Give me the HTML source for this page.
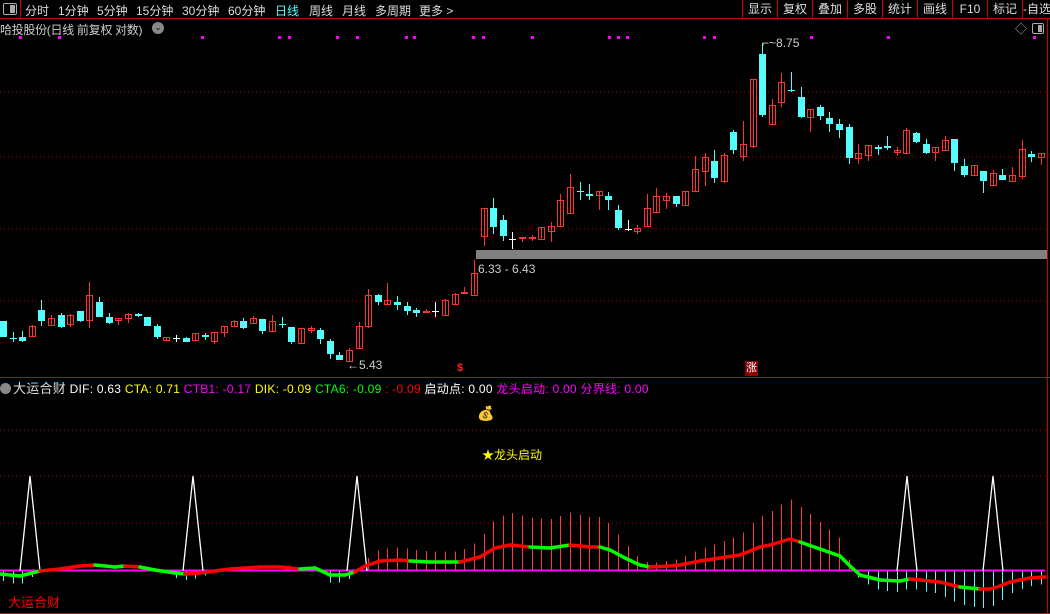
<!DOCTYPE html>
<html><head><meta charset="utf-8">
<style>
*{margin:0;padding:0;box-sizing:border-box}
body{width:1050px;height:614px;background:#000;overflow:hidden;position:relative;font-family:"Liberation Sans","Noto Sans CJK SC",sans-serif;font-size:12px;color:#ddd}
.t{position:absolute;white-space:nowrap}
#bar{position:absolute;left:0;top:0;width:1050px;height:19px;border-bottom:1px solid #c00}
.tab{position:absolute;top:2px;font-size:12px;color:#ddd}
.btn{position:absolute;top:0;height:19px;border-left:1px solid #c00;font-size:12px;color:#ddd;text-align:center;line-height:18px}
</style></head><body>
<div id="bar">
 <div style="position:absolute;left:3px;top:3px;width:14px;height:12px;border:1px solid #aaa;border-radius:2px"><div style="position:absolute;right:1px;top:1px;width:5px;height:8px;background:#aaa"></div></div>
 <div style="position:absolute;left:20px;top:0;width:1px;height:19px;background:#c00"></div>
 <span class="tab" style="left:25px">分时</span>
 <span class="tab" style="left:58px">1分钟</span>
 <span class="tab" style="left:97px">5分钟</span>
 <span class="tab" style="left:136px">15分钟</span>
 <span class="tab" style="left:182px">30分钟</span>
 <span class="tab" style="left:228px">60分钟</span>
 <span class="tab" style="left:275px;color:#5ff">日线</span>
 <span class="tab" style="left:309px">周线</span>
 <span class="tab" style="left:342px">月线</span>
 <span class="tab" style="left:375px">多周期</span>
 <span class="tab" style="left:419px">更多 &gt;</span>
 <div class="btn" style="left:742px;width:35px">显示</div>
 <div class="btn" style="left:777px;width:35px">复权</div>
 <div class="btn" style="left:812px;width:35px">叠加</div>
 <div class="btn" style="left:847px;width:35px">多股</div>
 <div class="btn" style="left:882px;width:35px">统计</div>
 <div class="btn" style="left:917px;width:35px">画线</div>
 <div class="btn" style="left:952px;width:35px">F10</div>
 <div class="btn" style="left:987px;width:35px">标记</div>
 <div class="btn" style="left:1022px;width:30px;text-align:left">-自选</div>
</div>
<div class="t" style="left:0;top:21px;font-size:12px;color:#ccc;letter-spacing:-0.3px">哈投股份(日线 前复权 对数)</div>
<div style="position:absolute;left:152px;top:22px;width:12px;height:12px;border-radius:6px;background:#888;color:#000;font-size:8px;text-align:center;line-height:12px">⌄</div>
<div class="t" style="left:1015px;top:20px;color:#aaa;font-size:12px">◇</div>
<div style="position:absolute;left:1032px;top:23px;width:12px;height:11px;border:1px solid #aaa;border-radius:2px"><div style="position:absolute;right:1px;top:1px;width:4px;height:7px;background:#aaa"></div></div>

<svg id="s" width="1050" height="614" style="position:absolute;left:0;top:0" xmlns="http://www.w3.org/2000/svg" shape-rendering="crispEdges"></svg>

<div class="t" style="left:478px;top:262px;color:#ccc;font-size:12px">6.33 - 6.43</div>
<div class="t" style="left:347px;top:358px;color:#ccc;font-size:12px">←5.43</div>
<div class="t" style="left:762px;top:36px;color:#ccc;font-size:12px">⌐~8.75</div>
<div class="t" style="left:457px;top:362px;color:#f22;font-size:11px;font-weight:bold">$</div>
<div class="t" style="left:745px;top:361px;width:13px;height:15px;background:#8b0000;color:#fff;font-size:11px;line-height:15px;text-align:center">涨</div>

<div class="t" style="left:0;top:378px;font-size:12px;letter-spacing:0.25px">
<span style="display:inline-block;width:11px;height:11px;border-radius:6px;background:#888;vertical-align:-1px;margin-right:2px"></span><span style="color:#ddd;font-size:13px">大运合财</span>
<span style="color:#fff">DIF: 0.63</span> <span style="color:#ff0">CTA: 0.71</span> <span style="color:#f0f">CTB1: -0.17</span> <span style="color:#ff0">DIK: -0.09</span> <span style="color:#0f0">CTA6: -0.09</span> <span style="color:#f00">: -0.09</span> <span style="color:#fff">启动点: 0.00</span> <span style="color:#f0f">龙头启动: 0.00</span> <span style="color:#f0f">分界线: 0.00</span>
</div>
<div class="t" style="left:477px;top:405px;font-size:14px">💰</div>
<div class="t" style="left:482px;top:446px;color:#ff0;font-size:12px">★龙头启动</div>
<div class="t" style="left:8px;top:592px;color:#f00;font-size:13px">大运合财</div>

<script>
var s=document.getElementById('s'),h='';
function L(x1,y1,x2,y2,c,w,d){h+='<line x1="'+x1+'" y1="'+y1+'" x2="'+x2+'" y2="'+y2+'" stroke="'+c+'" stroke-width="'+(w||1)+'"'+(d?' stroke-dasharray="'+d+'"':'')+'/>';}
function R(x,y,w,hh,f,st){h+='<rect x="'+x+'" y="'+y+'" width="'+w+'" height="'+hh+'" fill="'+f+'"'+(st?' stroke="'+st+'"':'')+'/>';}
[92,157,229,301].forEach(function(y){L(0,y,1047,y,'#a00',1,'1 3');});
[430,476,523].forEach(function(y){L(0,y,1047,y,'#a00',1,'1 3');});
L(0,377.5,1050,377.5,'#c00',1);L(1047.5,19,1047.5,614,'#c00',1);L(0,613.5,1050,613.5,'#c00',1);
[19,58,201,278,288,336,356,405,413,472,482,531,608,617,626,703,713,810,887,1033].forEach(function(x){R(x,36,3,3,'#f0f');});
R(476,250,571,9,'#808080');
var C=[['c',321,337,321,337],['c',338,339,332,342],['c',337,341,331,342],['r',326,337,325,337],['c',310,321,300,326],['r',318,326,315,326],['c',315,327,313,328],['r',315,325,314,327],['c',311,321,311,322],['r',295,321,282,328],['c',302,317,297,317],['c',317,323,313,324],['r',318,321,318,325],['r',314,319,313,323],['c',314,316,313,317],['c',317,326,317,326],['c',326,337,324,339],['r',337,341,337,341],['w',338,339,335,342],['c',338,342,337,342],['r',333,341,333,341],['c',335,337,333,340],['r',332,342,332,344],['r',326,333,326,337],['r',321,327,320,327],['c',321,328,318,329],['r',318,324,316,324],['c',319,331,319,334],['r',321,332,315,332],['c',324,325,317,328],['c',327,342,327,344],['r',328,344,328,344],['r',328,331,326,333],['c',330,339,328,344],['c',341,354,339,359],['c',355,360,352,360],['r',350,362,348,362],['r',326,349,322,349],['r',295,327,289,328],['c',295,302,294,305],['r',300,305,283,305],['c',302,305,296,310],['c',306,311,302,315],['c',310,313,308,317],['r',311,313,309,313],['w',311,312,302,317],['r',300,316,299,316],['r',294,305,293,305],['r',292,294,287,294],['r',273,296,260,296],
['r',208,237,208,246],['c',208,227,198,234],['c',220,236,215,241],['w',239,240,232,249],['r',237,239,237,242],['r',237,239,235,241],['r',227,240,227,240],['r',226,232,222,242],['r',200,227,194,227],['r',187,214,174,214],['c',191,192,182,200],['c',194,196,184,200],['r',191,196,191,210],['c',196,200,192,210],['c',210,228,205,230],['w',229,230,220,231],['r',228,232,225,234],['r',208,227,194,227],['r',196,213,188,213],['r',196,201,193,209],['c',196,204,196,207],['r',191,206,191,206],['r',169,192,156,192],['r',157,172,153,186],['c',161,178,150,183],['r',155,182,153,183],['c',132,150,130,154],['r',144,157,121,161],['r',79,147,79,148],['c',54,115,43,117],['r',105,125,99,125],['r',82,103,73,107],['c',90,91,72,92],['c',97,117,87,118],['r',109,118,109,132],['c',107,116,105,120],['c',118,124,112,132],['c',124,130,119,138],['c',127,158,124,164],['r',153,159,144,164],['r',145,156,145,161],['c',147,149,145,155],['c',146,148,136,150],['r',150,153,147,156],['r',130,154,128,154],['c',133,142,132,143],['c',144,153,139,154],['r',147,153,147,161],['r',140,151,136,151],['c',139,163,139,171],['c',166,175,159,177],['r',165,176,165,176],['c',171,181,171,193],['r',173,186,170,186],['c',175,180,169,180],['r',175,182,167,182],['r',149,177,140,179],['c',154,157,151,162],['r',153,158,153,165]];
var col={r:'#ff3232',c:'#54fcfc',w:'#ffffff'};
C.forEach(function(k,i){var x=Math.round(3+i*9.61),c=col[k[0]];L(x+0.5,k[3],x+0.5,k[4],c,1);
 var hh=Math.max(1,k[2]-k[1]);
 if(k[0]=='r'){if(hh<=2)R(x-3,k[1],7,2,c);else R(x-2.5,k[1]+0.5,6,hh-1,'none',c);}
 else R(x-3,k[1],7,hh,c);});
var P=[[0,574,'g'],[20,576,'g'],[40,571,'r'],[60,569,'r'],[80,566,'r'],[95,565,'g'],[115,567,'g'],[125,566,'r'],[140,567,'g'],[155,570,'g'],[175,573,'g'],[185,574,'r'],[200,573,'r'],[230,569,'r'],[260,567,'r'],[280,567,'r'],[300,569,'g'],[315,568,'g'],[330,575,'g'],[345,575,'g'],[355,572,'r'],[365,566,'r'],[380,561,'r'],[400,560,'r'],[410,561,'g'],[430,562,'g'],[460,562,'r'],[480,557,'r'],[495,548,'r'],[510,545,'r'],[530,547,'g'],[550,548,'g'],[570,545,'r'],[590,547,'r'],[600,547,'g'],[610,550,'g'],[625,558,'g'],[640,565,'g'],[650,567,'r'],[670,566,'r'],[680,565,'r'],[700,561,'r'],[720,558,'r'],[740,555,'r'],[750,551,'r'],[760,547,'r'],[770,545,'r'],[790,539,'r'],[800,542,'g'],[820,549,'g'],[840,556,'g'],[850,566,'g'],[860,575,'g'],[880,580,'g'],[900,581,'g'],[910,579,'r'],[920,580,'r'],[940,582,'r'],[960,587,'g'],[980,589,'r'],[990,589,'r'],[1000,586,'r'],[1010,582,'r'],[1030,578,'r'],[1045,577,'r']];
function cy(x){for(var i=1;i<P.length;i++)if(x<=P[i][0]){var a=P[i-1],b=P[i];return a[1]+(b[1]-a[1])*(x-a[0])/(b[0]-a[0]);}return 577;}
for(var i=0;i<109;i++){var x=Math.round(3+i*9.61)+0.5,y=cy(x);
 if(x>350&&x<850){L(x,570,x,570-(570-y)*2.3,'#ff3a3a',1);}
 else if(x>850){L(x,570,x,570+(y-570)*2,'#54fcfc',1);}
 else if(y>572){L(x,570,x,570+(y-570)*2.5,'#54fcfc',1);}}
L(0,570.5,1045,570.5,'#ff00ff',2);
[30,193,357,907,993].forEach(function(x){h+='<polyline points="'+(x-10)+',571 '+x+',476 '+(x+10)+',571" fill="none" stroke="#fff" stroke-width="1.3" shape-rendering="auto"/>';});
for(var i=1;i<P.length;i++){var a=P[i-1],b=P[i];h+='<line x1="'+a[0]+'" y1="'+a[1]+'" x2="'+b[0]+'" y2="'+b[1]+'" stroke="'+(a[2]=='r'?'#ff0000':'#00ff00')+'" stroke-width="3.5" stroke-linecap="round" shape-rendering="auto"/>';}
s.innerHTML=h;
</script>
</body></html>
